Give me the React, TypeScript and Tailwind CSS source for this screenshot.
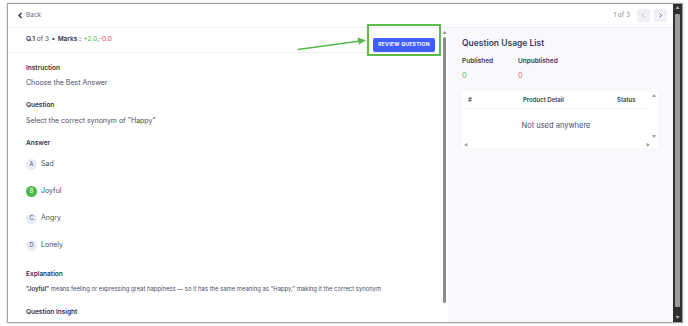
import React from "react";

const Heading = ({ children, className = "" }: { children: React.ReactNode; className?: string }) => (
  <div className={`text-[6.5px] leading-[10px] font-semibold text-[#30344b] ${className}`}>{children}</div>
);

const Body = ({ children, className = "" }: { children: React.ReactNode; className?: string }) => (
  <div className={`text-[7px] leading-[10px] text-[#4a4e63] ${className}`}>{children}</div>
);

const Option = ({ letter, text, correct }: { letter: string; text: string; correct?: boolean }) => (
  <div className="flex items-center gap-[4px] h-[11px]">
    <span
      className={`w-[11px] h-[11px] rounded-full flex items-center justify-center text-[5.5px] ${
        correct ? "bg-[#4cb84c] text-white" : "bg-[#e9ebf3] text-[#50546a]"
      }`}
    >
      {letter}
    </span>
    <span className="text-[7px] text-[#4a4e63]">{text}</span>
  </div>
);

const Chevron = ({ dir, size = "w-[5px] h-[5px]", width = 1.6 }: { dir: "left" | "right"; size?: string; width?: number }) => (
  <svg viewBox="0 0 10 10" className={size} fill="none" stroke="currentColor" strokeWidth={width}>
    {dir === "left" ? <path d="M6.5 1.5 3 5l3.5 3.5" /> : <path d="M3.5 1.5 7 5 3.5 8.5" />}
  </svg>
);

export default function App() {
  return (
    <div className="w-[688px] h-[326px] bg-white pl-[7px] pt-[3px] font-['Inter',sans-serif] overflow-hidden">
      <div className="w-[676px] h-[320px] border border-[#a2a2a2] shadow-[0_0_2px_rgba(0,0,0,0.25)] flex bg-white">
        <div className="flex-1 flex flex-col min-w-0">
          {/* top bar */}
          <div className="h-[24px] flex items-center justify-between pl-[9px] pr-[6px] border-b border-[#f0f0f4]">
            <div className="flex items-center gap-[2px] text-[#6d7082]">
              <span className="text-[#30344b]">
                <Chevron dir="left" size="w-[7px] h-[7px]" width={2} />
              </span>
              <span className="text-[6.5px]">Back</span>
            </div>
            <div className="flex items-center">
              <span className="text-[6.5px] text-[#8b8e9c] mr-[7px]">1 of 3</span>
              <span className="w-[13px] h-[13px] rounded-[2px] bg-[#eef0f6] flex items-center justify-center text-[#a5a8b5] mr-[4px]">
                <Chevron dir="left" />
              </span>
              <span className="w-[13px] h-[13px] rounded-[2px] bg-[#eef0f6] flex items-center justify-center text-[#4a4e63]">
                <Chevron dir="right" />
              </span>
            </div>
          </div>

          <div className="flex-1 flex min-h-0">
            {/* left panel */}
            <div className="w-[433px] flex flex-col">
              <div className="relative h-[25px] flex items-center justify-between pl-[18px] border-b border-[#f0f0f4]">
                <div className="text-[6.5px] text-[#4a4e63] flex items-center gap-[2.5px]">
                  <span>
                    <b className="text-[#30344b] font-semibold">Q.1</b> of 3
                  </span>
                  <span className="text-[#30344b]">•</span>
                  <b className="text-[#30344b] font-semibold">Marks :</b>
                  <span>
                    <span className="text-[#3fbf3f]">+2.0</span>,<span className="text-[#e0344a]">-0.0</span>
                  </span>
                </div>
                <div className="border-2 border-[#5bbd4a] px-[4px] py-[2px]">
                  <button className="h-[14px] w-[62px] rounded-[2px] bg-[#3f5efb] text-white text-[5px] font-bold tracking-[0.06em]">
                    REVIEW QUESTION
                  </button>
                </div>
                <svg className="absolute left-[288px] top-[8px] w-[72px] h-[16px]" viewBox="0 0 72 16" fill="none">
                  <path d="M2 13.5 L64 5" stroke="#56b848" strokeWidth="1.4" strokeLinecap="round" />
                  <path d="M70 4.2 L61.5 1.6 L63 8.6 Z" fill="#56b848" />
                </svg>
              </div>

              <div className="px-[18px] pt-[10px]">
                <Heading>Instruction</Heading>
                <Body className="mt-[5px]">Choose the Best Answer</Body>
                <Heading className="mt-[12px]">Question</Heading>
                <Body className="mt-[6px]">Select the correct synonym of "Happy"</Body>
                <Heading className="mt-[12px]">Answer</Heading>
                <div className="mt-[11px] flex flex-col gap-[16px]">
                  <Option letter="A" text="Sad" />
                  <Option letter="B" text="Joyful" correct />
                  <Option letter="C" text="Angry" />
                  <Option letter="D" text="Lonely" />
                </div>
                <Heading className="mt-[18px]">Explanation</Heading>
                <div className="mt-[5px] text-[5.9px] leading-[10px] text-[#4a4e63]">
                  <b className="font-semibold text-[#2a2d40]">"Joyful"</b> means feeling or expressing great happiness — so it
                  has the same meaning as "Happy," making it the correct synonym
                </div>
                <Heading className="mt-[13px]">Question Insight</Heading>
              </div>
            </div>

            {/* inner scrollbar */}
            <div className="w-[7px] flex flex-col items-center pt-[2px]">
              <span className="text-[4px] leading-[5px] text-[#8d8d8d]">▲</span>
              <div className="mt-[2px] w-[3px] h-[266px] rounded-full bg-[#8c8c8c]" />
            </div>

            {/* right panel */}
            <div className="flex-1 bg-[#f8f8fd] pl-[14px] pr-[15px] pt-[9px]">
              <div className="text-[8.5px] leading-[12px] font-semibold text-[#3a3e55]">Question Usage List</div>
              <div className="mt-[8px] flex gap-[18px]">
                <div className="w-[38px]">
                  <div className="text-[6.5px] leading-[9px] font-semibold text-[#3a3e55]">Published</div>
                  <div className="mt-[5px] text-[7.5px] leading-[9px] text-[#62c462]">0</div>
                </div>
                <div>
                  <div className="text-[6.5px] leading-[9px] font-semibold text-[#3a3e55]">Unpublished</div>
                  <div className="mt-[5px] text-[7.5px] leading-[9px] text-[#f06a7a]">0</div>
                </div>
              </div>

              <div className="mt-[11px] bg-white flex flex-col h-[57px]">
                <div className="flex flex-1">
                  <div className="flex-1 flex flex-col">
                    <div className="h-[18px] flex items-center border-b border-[#f0f0f4] pl-[6px] text-[6px] font-semibold text-[#3a3e55]">
                      <span className="w-[55px]">#</span>
                      <span className="w-[44px] whitespace-nowrap">Product Detail</span>
                      <span className="ml-[50px]">Status</span>
                    </div>
                    <div className="flex-1 flex items-center justify-center pt-[2px] text-[7.5px] text-[#4a4e63]">Not used anywhere</div>
                  </div>
                  <div className="w-[8px] flex flex-col items-center justify-between py-[2px] text-[4px] leading-[5px] text-[#9a9a9a]">
                    <span>▲</span>
                    <span>▼</span>
                  </div>
                </div>
                <div className="h-[7px] flex items-center justify-between pl-[2px] pr-[8px] text-[4px] leading-[5px] text-[#9a9a9a]">
                  <span>◀</span>
                  <span>▶</span>
                </div>
              </div>
            </div>
          </div>
        </div>

        {/* outer scrollbar */}
        <div className="w-[9px] bg-[#2e2e2e] flex flex-col items-center py-[1px]">
          <span className="text-[4px] leading-[6px] text-[#b0b0b0]">▲</span>
          <div className="mt-[3px] w-[5px] flex-1 rounded-[1px] bg-[#9d9d9d]" />
          <div className="h-[8px]" />
          <span className="text-[4px] leading-[6px] text-[#b0b0b0]">▼</span>
        </div>
      </div>
    </div>
  );
}
